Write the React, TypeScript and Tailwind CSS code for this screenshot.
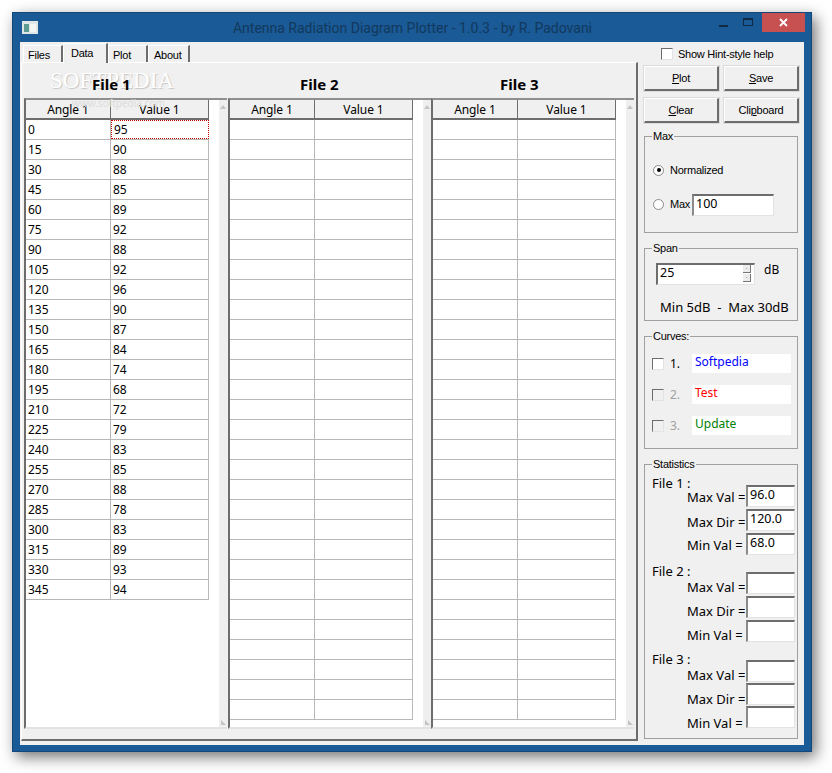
import type { ReactNode } from "react";

const FONT = "font-['Noto_Sans','Liberation_Sans',sans-serif]";
const UI = "font-['Liberation_Sans',sans-serif] text-[11px] tracking-[-0.25px]";

const data: [string, string][] = [
  ["0", "95"], ["15", "90"], ["30", "88"], ["45", "85"], ["60", "89"], ["75", "92"],
  ["90", "88"], ["105", "92"], ["120", "96"], ["135", "90"], ["150", "87"], ["165", "84"],
  ["180", "74"], ["195", "68"], ["210", "72"], ["225", "79"], ["240", "83"], ["255", "85"],
  ["270", "88"], ["285", "78"], ["300", "83"], ["315", "89"], ["330", "93"], ["345", "94"],
];

const Tab = ({ title, active, w }: { title: string; active?: boolean; w: string }) => (
  <div
    className={`${w} ${UI} border-l border-t border-white border-r-2 border-r-[#6d6d6d] ${
      active ? "h-[20px] bg-[#f0f0f0] pt-px relative top-px z-10" : "h-[17px] bg-[#f0f0f0] pt-px"
    }`}
  >
    <span className="leading-[16px]">{title}</span>
  </div>
);

const Grid = ({ rows, count }: { rows: [string, string][]; count: number }) => {
  const list = Array.from({ length: count }, (_, i) => rows[i] ?? ["", ""]);
  return (
    <div className="w-[203px] h-[631px] flex border-t-2 border-t-[#8f8f8f] border-b-2 border-b-[#e3e3e3] border-l-2 border-l-[#6d6d6d]">
      <div className="w-[193px] h-full bg-white">
        <div className="w-[183px] flex h-[20px] border-b-2 border-b-[#6d6d6d] bg-[#f0f0f0]">
          <div className="w-[85px] border-r border-r-[#6d6d6d] text-center leading-[20px] tracking-[-0.1px]">Angle 1</div>
          <div className="w-[98px] border-r border-r-[#6d6d6d] text-center leading-[20px] tracking-[-0.1px]">Value 1</div>
        </div>
        {list.map((r, i) => (
          <div key={i} className="w-[183px] flex h-[20px] border-b border-b-[#b8b8b8]">
            <div className="w-[85px] border-r border-r-[#b8b8b8] px-[2px] leading-[19px]">{r[0]}</div>
            {rows.length > 0 && i === 0 ? (
              <div className="w-[98px] h-[19px] border border-dotted border-[#d00000] px-[2px] leading-[17px]">{r[1]}</div>
            ) : (
              <div className="w-[98px] border-r border-r-[#b8b8b8] px-[2px] leading-[19px]">{r[1]}</div>
            )}
          </div>
        ))}
      </div>
      <div className="w-[8px] h-full bg-[#efefef] flex flex-col justify-between items-center">
        <svg width="8" height="8" viewBox="0 0 8 8" className="mt-[3px]"><path d="M1 6 L4 2 L7 6 Z" fill="#c4c4c4" /></svg>
        <svg width="8" height="8" viewBox="0 0 8 8" className="mb-[1px]"><path d="M2 2 L2 7 L7 7 Z" fill="#c4c4c4" /></svg>
      </div>
    </div>
  );
};

const Button = ({ children }: { children: ReactNode }) => (
  <div className={`${UI} w-[75px] h-[25px] bg-[#f0f0f0] flex items-center justify-center border-t border-l border-t-white border-l-white border-b-2 border-r-2 border-b-[#6d6d6d] border-r-[#6d6d6d] outline outline-1 outline-[#dcdcdc]`}>
    <span>{children}</span>
  </div>
);

const Group = ({ title, h, children, mt }: { title: string; h: string; children: ReactNode; mt: string }) => (
  <div className={`relative ${h} ${mt} w-[154px] border border-[#a0a0a0]`}>
    <span className={`${UI} absolute -top-[9px] left-[7px] bg-[#f0f0f0] px-px leading-[16px]`}>{title}</span>
    {children}
  </div>
);

const Check = ({ disabled }: { disabled?: boolean }) => (
  <div
    className={`w-[12px] h-[12px] border border-t-[#6d6d6d] border-l-[#6d6d6d] border-r-[#e3e3e3] border-b-[#e3e3e3] ${
      disabled ? "bg-[#f0f0f0]" : "bg-white"
    }`}
  />
);

const Radio = ({ on }: { on?: boolean }) => (
  <div className="w-[11px] h-[11px] rounded-full bg-white border border-[#8a8a8a] flex items-center justify-center">
    {on && <div className="w-[4px] h-[4px] rounded-full bg-black" />}
  </div>
);

const Sunken = ({ children, w }: { children?: ReactNode; w: string }) => (
  <div className={`${w} h-[22px] bg-white border-t-2 border-l-2 border-t-[#6d6d6d] border-l-[#8a8a8a] border-b border-r border-b-[#e3e3e3] border-r-[#e3e3e3] pl-[2px] leading-[15px] text-[12.5px]`}>
    {children}
  </div>
);

const Stat = ({ label, value, mt, off }: { label: string; value?: string; mt?: string; off: string }) => (
  <div className={`flex h-[22px] pl-[42px] ${mt ?? ""}`}>
    <span className={`w-[59px] text-[13px] leading-[22px] whitespace-nowrap ${off}`}>{label}</span>
    <Sunken w="w-[49px]">{value}</Sunken>
  </div>
);

const Curve = ({ n, label, color, disabled, mt }: { n: string; label: string; color: string; disabled?: boolean; mt: string }) => (
  <div className={`flex items-center ${mt}`}>
    <div className="ml-[7px]"><Check disabled={disabled} /></div>
    <span className={`ml-[6px] w-[22px] ${disabled ? "text-[#a0a0a0]" : ""}`}>{n}</span>
    <div className={`w-[99px] h-[19px] bg-white pl-[3px] leading-[15px] ${color}`}>{label}</div>
  </div>
);

export default function App() {
  return (
    <div className={`${FONT} w-[832px] h-[773px] bg-white pt-3 pl-3 text-[12px] text-black overflow-hidden`}>
      <div className="w-[800px] h-[740px] bg-[#1a5a96] border border-[#14467a] shadow-[4px_5px_14px_rgba(0,0,0,0.55)] px-[7px]">
        {/* title bar */}
        <div className="h-[29px] flex items-start">
          <svg width="16" height="13" viewBox="0 0 16 13" className="mt-[8px] ml-[2px]">
            <rect width="16" height="13" fill="#dfe6e8" />
            <rect x="2" y="3" width="5" height="8" fill="#5d9c94" />
            <rect x="8" y="3" width="6" height="8" fill="#f4f6f6" />
          </svg>
          <div className="flex-1 text-center text-[14px] leading-[30px] text-[#12385c] pl-[68px] font-['Roboto',sans-serif]">
            Antenna Radiation Diagram Plotter - 1.0.3 - by R. Padovani
          </div>
          <div className="flex items-start -mr-px">
            <div className="w-[9px] h-[2px] bg-[#0e2a44] mt-[12px]" />
            <div className="w-[10px] h-[8px] border border-[#0e2a44] border-t-2 ml-[15px] mt-[5px]" />
            <div className="w-[43px] h-[19px] bg-[#c75050] ml-[9px] flex items-center justify-center">
              <svg width="9" height="9" viewBox="0 0 9 9"><path d="M1 1 L8 8 M8 1 L1 8" stroke="white" strokeWidth="1.8" /></svg>
            </div>
          </div>
        </div>

        {/* client */}
        <div className="h-[703px] w-[784px] bg-[#f0f0f0] flex">
          <div className="w-[618px] pl-px">
            <div className="flex items-end h-[20px] pl-[2px]">
              <Tab title="Files" w="w-[40px] pl-[4px]" />
              <Tab title="Data" active w="w-[45px] pl-[7px]" />
              <Tab title="Plot" w="w-[40px] pl-[4px]" />
              <Tab title="About" w="w-[42px] pl-[5px]" />
            </div>
            <div className="relative h-[679px] border-t border-l border-t-white border-l-white border-r-2 border-r-[#6d6d6d] border-b-2 border-b-[#6d6d6d] pl-[2px]">
              <div className="absolute left-[28px] top-[5px] text-[23px] leading-[26px] text-white font-['Liberation_Serif',serif] [text-shadow:1px_1px_1px_#c4c4c4]">
                SOFTPEDIA
              </div>
              <div className="absolute left-[50px] top-[34px] text-[10px] leading-[12px] text-[#dcdcdc] z-10">www.softpedia.com</div>
              <div className="relative h-[35px] font-bold text-[15px] leading-[43px]">
                <span className="absolute left-[68px]">File 1</span>
                <span className="absolute left-[276px]">File 2</span>
                <span className="absolute left-[476px]">File 3</span>
              </div>
              <div className="flex">
                <Grid rows={data} count={24} />
                <div className="ml-px"><Grid rows={[]} count={30} /></div>
                <Grid rows={[]} count={30} />
              </div>
            </div>
          </div>

          {/* right column */}
          <div className="flex-1 pl-[6px]">
            <div className="flex items-center h-[24px] pl-[17px]">
              <Check />
              <span className={`${UI} ml-[5px] whitespace-nowrap`}>Show Hint-style help</span>
            </div>
            <div className="flex gap-[5px]">
              <Button><u>P</u>lot</Button>
              <Button><u>S</u>ave</Button>
            </div>
            <div className="flex gap-[5px] mt-[7px]">
              <Button><u>C</u>lear</Button>
              <Button>Cli<u>p</u>board</Button>
            </div>

            <Group title="Max" h="h-[97px]" mt="mt-[13px]">
              <div className="flex items-center gap-[6px] pl-[8px] pt-[25px]">
                <Radio on />
                <span className={UI}>Normalized</span>
              </div>
              <div className="flex items-center pl-[8px] mt-[15px]">
                <Radio />
                <span className={`${UI} ml-[6px] w-[22px]`}>Max</span>
                <Sunken w="w-[82px]">100</Sunken>
              </div>
            </Group>

            <Group title="Span" h="h-[73px]" mt="mt-[15px]">
              <div className="flex items-center pl-[11px] pt-[14px]">
                <div className="w-[99px] h-[22px] bg-white border-t-2 border-l-2 border-t-[#6d6d6d] border-l-[#6d6d6d] border-b border-r border-b-[#e3e3e3] border-r-[#e3e3e3] pl-[2px] leading-[15px] text-[12.5px] flex justify-between">
                  <span>25</span>
                  <div className="flex flex-col gap-px w-[8px] mr-[3px]">
                    <div className="h-[8px] bg-[#ececec] border-r border-b border-[#777] text-[6px] leading-[6px] text-center">·</div>
                    <div className="h-[8px] bg-[#ececec] border-r border-b border-[#777] text-[6px] leading-[6px] text-center">·</div>
                  </div>
                </div>
                <span className="ml-[9px] -mt-[8px]">dB</span>
              </div>
              <div className="mt-[13px] pl-[15px] text-[13px] leading-[18px] whitespace-pre">Min 5dB  -  Max 30dB</div>
            </Group>

            <Group title="Curves:" h="h-[113px]" mt="mt-[15px]">
              <Curve n="1." label="Softpedia" color="text-[#0000ff]" mt="mt-[17px]" />
              <Curve n="2." label="Test" color="text-[#ff0000]" disabled mt="mt-[12px]" />
              <Curve n="3." label="Update" color="text-[#008000]" disabled mt="mt-[12px]" />
            </Group>

            <Group title="Statistics" h="h-[275px]" mt="mt-[15px]">
              <div className="pl-[7px] pt-[10px] text-[13px] leading-[16px]">File 1 :</div>
              <Stat label="Max Val =" value="96.0" mt="-mt-[6px]" off="mt-px" />
              <Stat label="Max Dir =" value="120.0" mt="mt-[2px]" off="mt-[2px]" />
              <Stat label="Min Val =" value="68.0" mt="mt-[2px]" off="mt-px" />
              <div className="pl-[7px] pt-[8px] text-[13px] leading-[16px]">File 2 :</div>
              <Stat label="Max Val =" mt="-mt-[7px]" off="mt-[4px]" />
              <Stat label="Max Dir =" mt="mt-[2px]" off="mt-[4px]" />
              <Stat label="Min Val =" mt="mt-[2px]" off="mt-[4px]" />
              <div className="pl-[7px] pt-[9px] text-[13px] leading-[16px]">File 3 :</div>
              <Stat label="Max Val =" mt="-mt-[7px]" off="mt-[4px]" />
              <Stat label="Max Dir =" mt="mt-px" off="mt-[5px]" />
              <Stat label="Min Val =" mt="mt-px" off="mt-[6px]" />
            </Group>
          </div>
        </div>
      </div>
    </div>
  );
}
